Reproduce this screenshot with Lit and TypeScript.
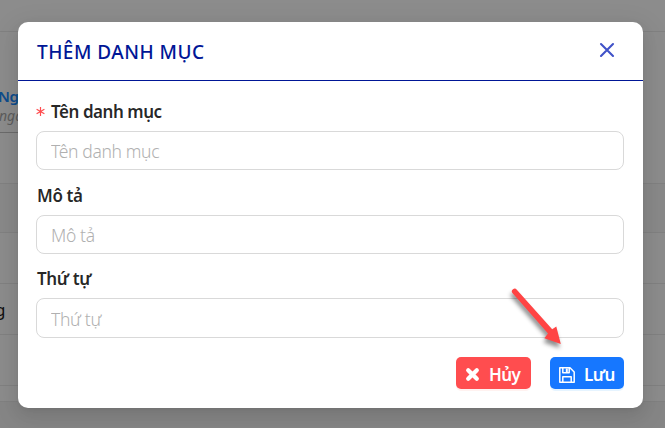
import { LitElement, html, css } from "lit";
import { customElement, property } from "lit/decorators.js";

@customElement("form-field")
class FormField extends LitElement {
  @property() label = "";
  @property({ type: Boolean }) required = false;

  static styles = css`
    :host { display: block; }
    .label {
      display: flex; align-items: center; height: 22px; margin-bottom: 9px;
      font-size: 17px; font-weight: 600; color: rgba(0, 0, 0, 0.86); white-space: nowrap;
      letter-spacing: -0.45px;
    }
    .label.plain { padding-left: 1px; letter-spacing: -0.4px; }
    .star { width: 9px; height: 9px; margin-right: 6px; }
    .box {
      display: block; box-sizing: border-box; width: 100%; height: var(--field-height, 39px);
      padding: 1px 14px 0; border: 1px solid #d9d9d9; border-radius: 8px; background: #fff;
      font: inherit; font-size: 17.5px; font-weight: 350; outline: none;
      letter-spacing: -0.35px;
    }
    .box::placeholder { color: #b0b0b0; opacity: 1; }
  `;

  render() {
    return html`
      <label class="label ${this.required ? "" : "plain"}">
        ${this.required
          ? html`<svg class="star" viewBox="0 0 9 9" fill="none" stroke="#ff4d4f" stroke-width="1.2">
              <path d="M4.5 0V9M.6 2.2L8.4 6.8M.6 6.8L8.4 2.2" />
            </svg>`
          : null}
        <span>${this.label}</span>
      </label>
      <input class="box" placeholder=${this.label} />
    `;
  }
}

@customElement("app-root")
class AppRoot extends LitElement {
  static styles = css`
    :host {
      display: block; position: relative; width: 665px; height: 428px; overflow: hidden;
      font-family: "Noto Sans", "Open Sans", sans-serif; background: #f5f5f5;
    }
    .page { display: flex; flex-direction: column; height: 428px; }
    .page > div { box-sizing: border-box; flex: none; border-bottom: 1px solid #ececec; background: #fff; }
    .top { height: 32px; }
    .tabs { height: 152px; padding-top: 54px; }
    .tab { width: 40px; height: 47px; box-sizing: border-box; border-bottom: 1px solid #c4c4c4; font-size: 14px; line-height: 20px; white-space: nowrap; }
    .name { color: #1a8cff; font-weight: 600; font-size: 15px; letter-spacing: -0.5px; margin-left: -2px; }
    .hint { color: #aaa; font-style: italic; margin-left: -1px; }
    .page > .head { height: 49px; background: #fafafa; }
    .row { height: 51px; }
    .cell { font-size: 17px; line-height: 51px; margin-left: -5px; color: #222; }
    .last { height: 16px; }
    .mask { position: absolute; inset: 0; background: rgba(0, 0, 0, 0.45); }
    .modal {
      position: absolute; left: 18px; top: 22px; width: 625px; height: 386px;
      box-sizing: border-box; border-radius: 10px; background: #fff;
      box-shadow: 0 6px 16px rgba(0, 0, 0, 0.08), 0 3px 6px -4px rgba(0, 0, 0, 0.12), 0 9px 28px 8px rgba(0, 0, 0, 0.05);
    }
    .header {
      box-sizing: border-box; height: 59px; padding: 2px 28px 0 19px; border-bottom: 1px solid #001696;
      display: flex; align-items: center; justify-content: space-between;
    }
    .title { font-size: 19px; font-weight: 550; color: #001696; white-space: nowrap; letter-spacing: 0.48px; }
    .close { width: 16px; height: 16px; margin-top: -4px; }
    .form { padding: 19px 19px 0 18px; display: flex; flex-direction: column; gap: 14px; }
    .taller { --field-height: 40px; margin-top: -1px; }
    .footer { display: flex; justify-content: flex-end; gap: 19px; padding: 19px 19px 0 0; }
    .btn {
      box-sizing: border-box; height: 32px; padding: 2px 9px 0; border: 0; border-radius: 5px; color: #fff;
      display: flex; align-items: center; gap: 9px; font: 600 17px "Noto Sans", sans-serif; white-space: nowrap;
      letter-spacing: -0.6px;
    }
    .cancel { width: 75px; background: #ff4d4f; box-shadow: 0 2px 0 rgba(255, 38, 5, 0.06); }
    .save { width: 74px; background: #1677ff; box-shadow: 0 2px 0 rgba(5, 145, 255, 0.1); }
    .btn svg { flex: none; margin-top: 1px; }
    .arrow { position: absolute; left: 500px; top: 280px; width: 75px; height: 80px; filter: drop-shadow(-1px 4px 2px rgba(0, 0, 0, 0.45)); }
  `;

  render() {
    return html`
      <div class="page">
        <div class="top"></div>
        <div class="tabs"><div class="tab"><div class="name">Ng</div><div class="hint">ngày</div></div></div>
        <div class="head"></div>
        <div class="row"></div>
        <div class="row"><div class="cell">g</div></div>
        <div class="row"></div>
        <div class="last"></div>
      </div>
      <div class="mask"></div>
      <section class="modal">
        <header class="header">
          <span class="title">THÊM DANH MỤC</span>
          <svg class="close" viewBox="0 0 16 16" fill="none" stroke="#4052c8" stroke-width="2.1" stroke-linecap="round">
            <path d="M2 2L14 14M14 2L2 14" />
          </svg>
        </header>
        <div class="form">
          <form-field label="Tên danh mục" required></form-field>
          <form-field label="Mô tả"></form-field>
          <form-field class="taller" label="Thứ tự"></form-field>
        </div>
        <footer class="footer">
          <button class="btn cancel">
            <svg width="15" height="15" viewBox="0 0 15 15" fill="none" stroke="#fff" stroke-width="4.2" stroke-linecap="round">
              <path d="M3.2 3.2L11.8 11.8M11.8 3.2L3.2 11.8" />
            </svg>
            <span>Hủy</span>
          </button>
          <button class="btn save">
            <svg width="16" height="16" viewBox="0 0 16 16" fill="none" stroke="#fff" stroke-width="1.5" stroke-linejoin="round">
              <path d="M.8 .8H11L15.2 5V15.2H.8ZM3.8 .8V5.7H10.2V.8M3.8 15V9.7H12.2V15" />
              <path d="M7.8 1.5V5" stroke-width="2" />
            </svg>
            <span>Lưu</span>
          </button>
        </footer>
      </section>
      <svg class="arrow" viewBox="0 0 75 80" fill="#ff4444">
        <path d="M12.4 13A2.6 2.6 0 0 1 16.8 9.8L52.2 49.2L56.3 46.6L60.8 64L44.4 58.2L48 53.4Z" />
      </svg>
    `;
  }
}
